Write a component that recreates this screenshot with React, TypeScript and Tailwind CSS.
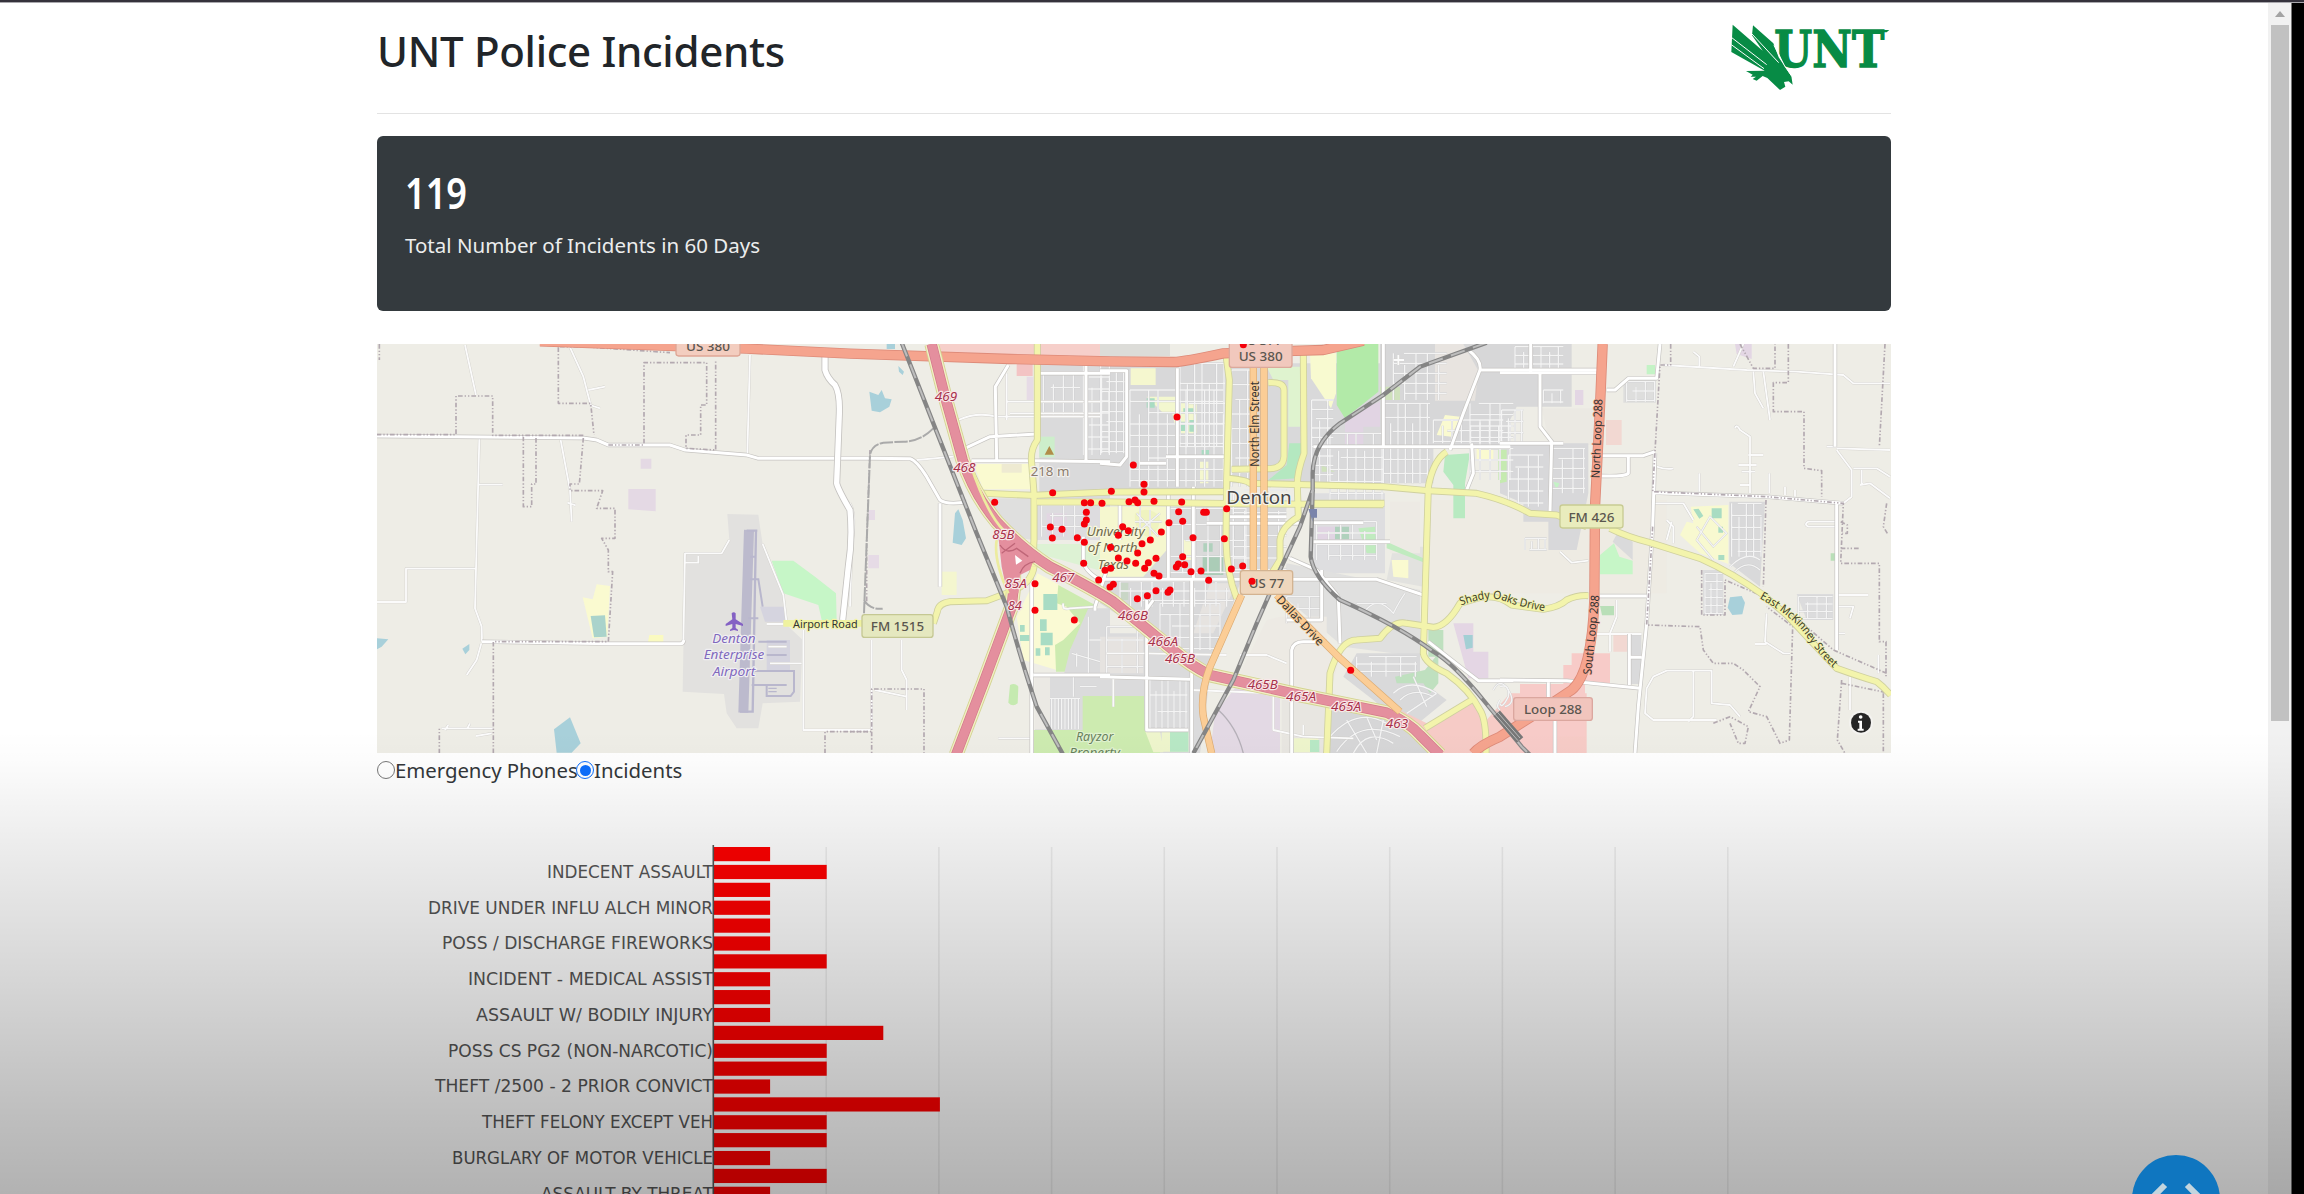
import React from 'react';

/* Horizontal origins of the map sheets, in map units (3 units per pixel). */
const WEST = 0;
const I35 = 1440;
const TOWN = 2190;
const EAST = 3390;

type Line = [number, string];
type Area = [number, string, string];

const areas: Area[] = [
  [WEST, 'M1072 522L1165 524L1170 560L1178 612L1240 765L1245 850L1298 900L1290 1085L1178 1090L1165 1165L1100 1165L1070 1120L1062 1062L938 1055L945 640L1055 640L1078 600Z', '#e2e1df'],
  [WEST, 'M1205 662L1270 662L1335 710L1398 760L1400 840L1355 840L1345 795L1240 760Z', '#c6f6c7'],
  [WEST, 'M680 733L720 738L712 890L668 895L638 772L668 778Z', '#fafad0'],
  [WEST, 'M662 828L705 826L710 890L672 892Z', '#aad3cb'],
  [WEST, 'M838 885h42v22h-46z', '#fafac0'],
  [WEST, 'M600 1132L632 1210L605 1238L560 1238L552 1168Z', '#a8d0da'],
  [WEST, 'M20 895L55 898L35 920L20 928Z M298 912V930L286 943L277 926Z', '#a8d0da'],
  [WEST, 'M775 447H857V514L775 508Z M812 356H844V386H812Z', '#e4d9e4'],
  [WEST, 'M1170 800h75v45h-60z M1190 900h70v90h-70z', '#d5d4df'],
  [I35, 'M58 155L85 165L95 150L105 175L125 178L118 200L90 217L65 212Z M315 520L325 508L338 540L348 595L335 615L308 608Z M145 78L162 95L158 105L147 95Z M110 12h25v15h-25z', '#a8d0da'],
  [I35, 'M270 12H780V50H480L270 40Z', '#f6cfca'],
  [I35, 'M500 66H548V108H500Z', '#f3c4c4'],
  [I35, 'M530 110h20v70h-20z M55 510h20v30h-20z M55 645h32v40h-32z', '#e6dbe6'],
  [I35, 'M568 70H780V475H568Z', '#dadadb'],
  [I35, 'M568 290h46v62h-46z', '#cdeecb'],
  [I35, 'M370 372H545V448H400Z', '#fafad0'],
  [I35, 'M455 372h60v26h-60z', '#eeead2'],
  [I35, 'M400 475H550V600L480 590L420 540Z', '#dfdfde'],
  [I35, 'M558 490H780V600H558Z', '#dddcdf'],
  [I35, 'M590 520h60v70h-60z', '#e2d6e2'],
  [I35, 'M560 612H780V700L560 640Z', '#ddf2d4'],
  [I35, 'M275 695h45v70h-45z', '#f4f6cf'],
  [I35, 'M562 700L620 730L720 800L620 990L520 960L500 830L550 730Z', '#fafad4'],
  [I35, 'M625 735L735 795L715 860L660 930L655 995L618 995L615 915L640 900L690 850L650 800L620 790Z', '#cdebb0'],
  [I35, 'M480 1035q15 -8 25 5l-2 50q-15 12 -28 -2z', '#c5eab0'],
  [I35, 'M580 762h42v48h-42z M510 855h14v20h-14z M510 885h28v18h-28z M570 838h20v35h-20z M572 878h36v38h-36z M557 925h14v22h-14z M585 922h14v24h-14z', '#a8dcc4'],
  [I35, 'M715 805H780V1240H555V1010H640L660 930Z', '#dbdbdc'],
  [I35, 'M555 1010H600V1168H555Z', '#ebe9e4'],
  [I35, 'M698 1068H780V1240H550V1170H698Z', '#cdebb0'],
  /* Town */
  [TOWN, 'M0 70H380V460H0Z', '#d8d8d9'],
  [TOWN, 'M0 12H210V48L0 50Z', '#dcdcd8'],
  [TOWN, 'M580 70H1000V430H390V80H450Z', '#d9d9da'],
  [TOWN, 'M840 12H1230V320H840Z', '#d7d7d8'],
  [TOWN, 'M1005 12h85l45 80l-10 90h-120z', '#e8e4e0'],
  [TOWN, 'M0 500H560L540 700H0Z', '#dadada'],
  [TOWN, 'M640 460H855V700H640Z', '#dedee0'],
  [TOWN, 'M0 700H430L330 1000L140 880L0 790Z', '#d9d9da'],
  [TOWN, 'M0 880H180L330 1010L300 1240H130L0 1060Z', '#dbdbdc'],
  [TOWN, 'M560 670L960 750V950L730 920L540 760Z', '#e0e0df'],
  [TOWN, 'M540 830H680V910L720 950L690 1060L420 1000L500 840Z', '#edeae4'],
  [TOWN, 'M330 730h80l-70 150h-60z M0 890h130v110h-130z', '#e6e3e0'],
  [TOWN, 'M770 940h190v80l80 60l-110 90l-110 -90l-90 -70z', '#d9d9da'],
  [TOWN, 'M690 1110L860 1130L960 1180L1010 1240H690Z', '#d6d6d7'],
  [TOWN, 'M405 1045L540 1075V1240H330L345 1120Z', '#e3d9e4'],
  [TOWN, 'M545 1080H690V1240H545Z', '#e8e6e1'],
  [TOWN, 'M880 620h90v120l-110 -20z', '#e2e2df'],
  [TOWN, 'M870 485H960V640L870 640Z', '#edeae4'],
  [TOWN, 'M985 480H1700V760H1100L1030 850H985Z', '#eeebe3'],
  [TOWN, 'M1060 850h60v85h45v80h-60z', '#e4d6e4'],
  [TOWN, 'M985 870h45v80h-45z M885 1010l90 -20l40 -50v90l-25 30l-20 -30h-80z', '#bfe0bf'],
  [TOWN, 'M1090 885h28v38l-20 5z', '#a3cfd4'],
  [TOWN, 'M710 12H835V155L735 235L710 195Z', '#b2eaa8'],
  [TOWN, 'M630 40h78v120l-15 45l-60 -90z', '#f8fad0'],
  [TOWN, 'M565 80h35v180h-35z M500 80h90v40h-70z', '#dff3cf'],
  [TOWN, 'M568 310h42l-20 105l-85 5l55 -45z', '#b4e8c0'],
  [TOWN, 'M705 395h-40v-20z M840 140h60v40h-60z', '#d0e2bd'],
  [TOWN, 'M760 215L840 185V260H790V315H735V250Z M650 560h60v45h-60z', '#e1d4e3'],
  [TOWN, 'M775 565l50 -5l5 80h-30z M860 605l110 50v12l-110 -42z', '#c0ebbf'],
  [TOWN, 'M705 560h42v38h-42z M310 610h28v25h-28z', '#b0d1bd'],
  [TOWN, 'M308 645H370V705H308Z', '#abccb7'],
  [TOWN, 'M1035 345l75 -5l-15 90v105h-35v-100l-30 -40z', '#b8eac1'],
  [TOWN, 'M1035 225l45 5l-25 60l-45 -5z M1130 325h50v35h-50z M875 660h50v55l-45 -5z', '#fafad0'],
  [TOWN, 'M92 85h75v50h-75z M0 500h200v130l-70 80h-130z M250 600h25v60h-25z M300 365h25v65h-25z', '#f5f7cf'],
  [TOWN, 'M140 170h90v45l-40 5z M210 190h80v90h-60z', '#f3f7cf'],
  [TOWN, 'M140 175h24v28h-24z M250 205h30v14h-30z M240 245h18v28h-18z M268 240h16v35h-16z M305 330h22v18h-22z', '#a9dcc2'],
  [TOWN, 'M1195 320h25v100h-25z', '#c5eab0'],
  [TOWN, 'M105 520q40 -25 75 10q0 50 -40 60q-40 -20 -35 -70z', '#eff3bf'],
  [TOWN, 'M60 720h25v60h-25z', '#c9d6c6'],
  [TOWN, 'M0 1068H132L135 1170H180V1240H0Z', '#cdebb0'],
  [TOWN, 'M135 1172h45l10 65h-30z M185 1175h80v60h-80z M570 1195h85v42h-85z', '#eef5cc'],
  [TOWN, 'M210 1175h55v60h-55z M630 1200h28v36h-28z', '#b8e8c5'],
  [TOWN, 'M900 1110L980 1150L1115 1080L1160 1160V1240H1030Z', '#f6cbc6'],
  [TOWN, 'M1160 1140L1230 1060H1460V1240H1160Z', '#f6cbc6'],
  /* East */
  [EAST, 'M0 12H215V200H50L0 300Z', '#d8d8d9'],
  [EAST, 'M125 205H285V315H150Z', '#ebe9e3'],
  [EAST, 'M0 310H265V460L230 630H145V545H70V490L0 460Z', '#d8d8da'],
  [EAST, 'M225 150h25v45h-25z M705 12h50v45l-45 -15z', '#e3d6e4'],
  [EAST, 'M0 320h20v105l-20 5z', '#c5eab0'],
  [EAST, 'M440 75h25v28h-25z M160 425l18 5l-8 20z', '#c4f3c6'],
  [EAST, 'M318 240h47v75h-47z M340 885h42v50h-42z', '#f2d8d2'],
  [EAST, 'M215 940H330V1032H190V975H215Z M60 1032H255V1190H175V1240H60Z', '#f7cbc8'],
  [EAST, 'M370 120H468V188H370Z', '#dededd'],
  [EAST, 'M352 580l46 25v55l-60 -55z M388 882h36v150h-36z', '#dadadb'],
  [EAST, 'M342 610L358 650L398 662V703H300V645Z', '#c6f6c7'],
  [EAST, 'M300 798h42v28h-36z M992 640h16v22h-16z', '#b9dfb8'],
  [EAST, 'M572 500L685 495V672L600 640L540 585L560 545L580 550Z', '#f8f9d0'],
  [EAST, 'M580 508l16 -2l14 22l-12 8z M635 505h30v30h-30z M655 560h14v18h-14z M655 645h18v15h-18z', '#a9dcc2'],
  [EAST, 'M688 485H795L780 740L688 670Z', '#d9d9da'],
  [EAST, 'M608 690L670 690V825H610Z', '#dcdcdd'],
  [EAST, 'M690 772l35 -4l10 20l-8 35l-30 2l-14 -22z', '#a8d0da'],
  [EAST, 'M890 762H1000V840H920Z', '#dcdcdd'],
];

/* Straight residential streets covering a block. */
function streets(x0: number, y0: number, x1: number, y1: number, dx: number, dy: number) {
  let d = '';
  let i = 0;
  for (let x = x0; x <= x1; x += dx, i++) {
    const inset = (i * 37) % 3 === 1 ? (y1 - y0) * 0.25 : 0;
    d += `M${x} ${y0 + inset}V${y1}`;
  }
  for (let y = y0; y <= y1; y += dy, i++) {
    const inset = (i * 53) % 4 === 1 ? (x1 - x0) * 0.2 : 0;
    d += `M${x0 + inset} ${y}H${x1}`;
  }
  return d;
}

const fineStreets: Line[] = [
  [I35, streets(580, 100, 690, 230, 30, 42)],
  [I35, streets(700, 75, 780, 345, 26, 36)],
  [I35, streets(575, 495, 700, 590, 33, 32)],
  [I35, 'M605 1075V1168M615 1075V1168M625 1075V1168M635 1075V1168M645 1075V1168M655 1075V1168M665 1075V1168M675 1075V1168M685 1075V1168M600 1075H690M718 900H755M715 830V1010M670 1010V1070M690 1040H740M665 940L750 965M680 940V980'],
  [TOWN, streets(5, 95, 75, 340, 22, 30)],
  [TOWN, streets(90, 150, 370, 440, 28, 34)],
  [TOWN, streets(240, 70, 375, 320, 22, 60)],
  [TOWN, streets(395, 90, 450, 440, 24, 44)],
  [TOWN, streets(635, 180, 700, 425, 24, 28)],
  [TOWN, streets(690, 280, 850, 490, 26, 36)],
  [TOWN, streets(850, 190, 990, 430, 22, 42)],
  [TOWN, streets(880, 40, 1040, 180, 34, 30)],
  [TOWN, streets(1000, 240, 1210, 310, 28, 32)],
  [TOWN, streets(1110, 190, 1240, 420, 30, 34)],
  [TOWN, streets(210, 505, 440, 700, 38, 48)],
  [TOWN, streets(400, 450, 560, 700, 34, 34)],
  [TOWN, streets(60, 725, 400, 800, 32, 28)],
  [TOWN, streets(180, 790, 360, 930, 30, 34)],
  [TOWN, streets(20, 860, 130, 1000, 46, 40)],
  [TOWN, streets(150, 1015, 262, 1165, 18, 50)],
  [TOWN, streets(650, 545, 830, 660, 36, 34)],
  [TOWN, streets(560, 770, 660, 850, 34, 36)],
  [TOWN, streets(770, 950, 950, 1010, 44, 22)],
  [TOWN, 'M690 1190Q770 1100 860 1150M710 1235Q780 1130 900 1190M760 1240Q800 1160 880 1210M800 1130L830 1200M740 1140L800 1240M850 1140L830 1240M880 1060Q930 1010 1010 1060M900 1080Q940 1040 1000 1070M940 1010L980 1100M920 1120L1010 1060M790 820Q830 760 880 820Q900 780 915 760M770 790H860M1180 1050q20 -40 45 0t-10 50M1200 1080q-15 20 0 30'],
  [TOWN, 'M120 500v100M150 510v90M105 545h80M110 580L180 520M110 520L175 590'],
  [EAST, streets(45, 20, 190, 85, 26, 26)],
  [EAST, streets(5, 210, 70, 310, 20, 34)],
  [EAST, streets(155, 325, 255, 460, 32, 30)],
  [EAST, streets(25, 345, 130, 500, 30, 36)],
  [EAST, streets(75, 595, 140, 630, 20, 34)],
  [EAST, streets(130, 150, 190, 190, 26, 36)],
  [EAST, streets(380, 125, 465, 185, 28, 28)],
  [EAST, streets(695, 490, 785, 650, 22, 36)],
  [EAST, streets(615, 700, 668, 820, 18, 24)],
  [EAST, streets(895, 770, 998, 838, 28, 22)],
  [EAST, 'M690 680Q740 630 780 660M700 700Q740 655 780 690M590 560L640 620L680 580L630 530L590 600L640 660M0 1040q30 -10 25 30q-20 40 -25 20'],
];

const whiteThin: Line[] = [
  [WEST, 'M285 15L318 165M328 295L315 805L335 860L336 905M326 434H398M20 786H108V686H316M334 910L320 960L290 1005M572 300L600 450L605 545M592 488l25 8M600 22L640 110L662 195M655 150L705 140M660 195L690 205M215 1165H370M235 1155l-10 15M300 1150l-8 15M318 1188L365 1180M1140 45L1132 340M940 915L945 640H1055L1078 600M1178 612L1240 765L1250 850M1190 852h50M1195 920h55M1200 970h95M1300 870V1170H1500M945 668H985V648'],
  [I35, 'M470 185H750M480 220H750M325 240Q380 215 440 230H750M470 100V240M200 360L310 350M270 490V640M0 490Q20 520 5 620L0 800M155 900V990L170 1020V1110M75 1050L170 1070M65 900V1170M640 790q-5 22 20 15L740 800M445 1195H545'],
  [TOWN, 'M20 940H130L380 945M0 1015H140M420 945H500L560 970M275 1050L520 1060V1170L610 1190L760 1195M610 1155V1185M40 1015V1100M560 650L640 690M880 60h32M895 45v30'],
  [EAST, 'M490 75L740 90L890 95L1030 105L1060 130H1170M760 95L765 160L790 205M790 95L810 240M705 265Q710 250 720 270L750 290V460M715 375H770M725 395H765M720 435H750M745 345H790M598 400V455M808 400V460M855 440V465M885 450V470M730 12L700 80M580 35l18 15v30M470 380Q500 390 520 385M1010 545H925q-15 8 0 15H1010M180 635L215 668L265 662M350 780V830L330 880V935M290 882H425M455 490H550L580 540M500 540L520 560V610M515 545L500 600M800 820L795 905L850 940H870M765 912H800M1010 765H1105M1010 800H1060L1050 835M1010 880H1035M440 1045L460 1010L500 992H635V1090L690 1095L720 1130M580 990V1130L565 1145M440 1045L435 1120L460 1140H650M1010 545V930M1010 330L1055 390V470L1030 490M980 320H1010M1060 385H1130L1170 410M1080 435L1110 430L1170 475M1085 390V435M1010 325L1170 330M1135 945V1000M1050 1010V1110'],
];

const whiteMain: Line[] = [
  [WEST, 'M20 288L640 294L680 300L715 315L900 315L945 330L1130 345L1165 355H1500L1620 356Q1640 362 1670 410L1710 480Q1730 495 1790 486'],
  [WEST, 'M336 905L720 911H930Q940 912 942 900'],
  [I35, 'M475 75L436 140L440 360M345 325L420 290L560 282M270 490L270 740M365 362H560L780 365M545 700V1240M550 1005H780M700 590V660Q700 690 750 720M770 690L735 800V812M708 360V75M568 100H780'],
  [TOWN, 'M0 92H80V350L60 375L0 370M120 370H198M198 350H380M232 85V440M205 460V720M60 480V600M0 718H830L970 765M280 440V720M140 780V900L140 1170H265M275 720V1240M0 1010L270 1018M160 780L110 850M570 655L650 690L715 770M665 690V840H560M715 770L720 910M575 1240V930Q580 905 610 905H680M640 320H1230M640 548H790M640 605H870M320 550H600M850 12V320M1105 30Q1145 60 1140 90L1090 220L1050 330M1140 90H1500M985 905Q1080 980 1135 1022H1240M1115 310L1120 400L1100 450M840 800M390 530H560'],
  [EAST, 'M0 98H290M92 12V98M120 98V260L155 305L150 515M0 310H190M320 150H345L385 115H470L480 12M305 347H385V400Q375 410 305 408M385 347H430L465 335M465 340L458 560L440 850L415 1100L405 1240M460 458L800 470L1030 490M1005 12V320M1010 490V930M300 768H440M0 1020L200 1022L420 1045M145 1022V1080M165 1140V1240M388 882V1035M390 952H425'],
];

const boundaries: Line[] = [
  [WEST, 'M20 284H258V168H368V286H640M28 12V60M565 22V190H662L672 285M570 20H640L900 38M822 310V68H1010V195H992V285H948V325L1037 330V60M460 290V500H485V432H498V290M640 294L628 432H600V452H698L680 505H735V595H695L715 630V695H728L715 905L370 905V1240M715 315H820M208 1240V1165M1365 1240V1175H1500'],
  [WEST, 'M1500 330L1490 600V790'],
  [I35, 'M0 1175H65V1047H222V1240M65 1175V1240'],
  [EAST, 'M512 12V75H480L458 455L800 470L1030 490L1022 670H1138V905H1158V1010M720 12L760 85H825V12M865 12V128H820V215H912V385L965 392V470M1155 12L1138 320M1160 490L1150 560L1165 585M458 560L440 855L600 860L610 930L640 970H700L730 990L780 1040L745 1115L800 1130L840 1210L868 1200L878 860L800 800M798 480L790 740M605 690V825H675V720L780 765M880 825L1000 930L1160 1000M1025 1030L1170 1060M1025 1020L1012 1200L1035 1240M1150 1060V1240M640 1150L690 1130L745 1160L735 1210H715L690 1150M1022 545l20 10v25h-15M1022 625H1078'],
];

const yellowRoads: Line[] = [
  [I35, 'M562 12V300Q540 330 545 370L552 460V600Q550 620 552 680'],
  [I35, 'M400 460L550 466L780 456L1120 455'],
  [I35, 'M560 486H780L1240 492L1600 494'],
  [I35, 'M552 680Q545 735 470 760L410 782L300 785Q265 790 262 815L250 850'],
  [TOWN, 'M378 45L388 120L380 420L378 600Q380 700 410 775'],
  [TOWN, 'M610 45L612 340Q590 400 592 440L595 530Q545 560 540 600L540 660L515 700'],
  [TOWN, 'M505 128Q552 125 552 150V350Q550 385 510 386L395 388'],
  [TOWN, 'M385 415Q440 420 450 430L850 440L985 452L1130 460Q1220 480 1290 520L1370 525L1460 560'],
  [TOWN, 'M640 490H853'],
  [TOWN, 'M1040 335Q1000 360 985 440L970 940Q975 970 1040 1000Q1110 1050 1140 1110Q1160 1140 1158 1240'],
  [TOWN, 'M680 1240L690 1000Q720 900 770 900L840 895Q880 840 920 850L1000 862Q1040 860 1080 790L1130 775Q1190 760 1235 795L1330 808Q1380 800 1400 780Q1430 765 1465 767'],
  [TOWN, 'M975 1165L1115 1080'],
  [EAST, 'M330 565Q380 590 450 608L600 655Q700 700 790 765L860 825Q930 900 1010 985Q1080 1010 1130 1025Q1150 1040 1172 1065'],
];

const orangeRoads: Line[] = [
  [TOWN, 'M460 80V700M492 80V700M530 765L720 955L900 1115M425 765L330 980Q300 1060 310 1130L335 1240'],
];

const redRoads: Line[] = [
  [WEST, 'M510 4L1130 26L1440 41L1920 57L2220 64L2410 66Q2440 66 2560 40L2720 34L2860 30L2980 2'],
  [EAST, 'M308 12L300 200L285 500L283 780Q275 1000 215 1050L110 1120L0 1190Q-60 1215 -80 1240'],
];

const motorways: Line[] = [
  [I35, 'M245 12L285 170L338 360Q370 460 440 545Q520 630 600 680Q720 740 790 785L870 850L975 935Q1020 975 1080 1005L1350 1065L1610 1118Q1680 1150 1710 1185L1770 1245'],
  [I35, 'M480 590Q500 690 485 800L400 1030L318 1245'],
];

const railways: Line[] = [
  [I35, 'M155 8L250 250L380 580L470 800Q510 950 560 1100L640 1245'],
  [TOWN, 'M1160 8L960 80L850 165L720 250Q640 310 638 400V450L600 560L540 690L470 850L400 1020L280 1240'],
  [TOWN, 'M638 450L632 650Q640 710 720 780Q900 860 1000 935Q1060 970 1150 1080L1265 1220L1290 1245'],
];

const dots: [number, number][] = [
  [310, 75], [342, 133], [342, 156], [244, 154], [68, 158], [163, 188], [182, 188], [216, 190], [297, 185], [315, 180], [323, 188], [372, 184], [455, 186],
  [169, 217], [169, 240], [163, 252], [446, 215], [521, 217], [529, 217], [590, 206], [61, 261], [96, 268], [67, 294], [278, 260], [295, 272], [265, 286],
  [142, 293], [163, 307], [394, 276], [417, 248], [458, 244], [489, 293], [583, 296], [336, 311], [361, 300], [242, 322], [323, 339], [265, 354], [291, 363],
  [317, 370], [378, 355], [355, 368], [344, 385], [161, 370], [225, 391], [242, 385], [458, 350], [445, 372], [439, 381], [464, 374], [483, 395], [513, 393],
  [536, 421], [604, 387], [638, 378], [666, 424], [372, 400], [387, 408], [206, 420], [240, 441], [250, 433], [378, 452], [352, 467], [322, 476], [414, 457],
  [420, 450], [15, 431], [15, 511], [133, 540], [-106, 187], [441, -69], [962, 691], [640, -286],
];

function Strokes({ lines, color, width, dash }: { lines: Line[]; color: string; width: number; dash?: string }) {
  return (
    <g fill="none" stroke={color} strokeWidth={width} strokeDasharray={dash} strokeLinejoin="round">
      {lines.map(([x, d], i) => (
        <path key={i} d={d} transform={`translate(${x} 0)`} />
      ))}
    </g>
  );
}

function Label({ x, y, size, width, color = '#333', halo = '#fff', haloWidth = 7, italic, rotate, children }: {
  x: number; y: number; size: number; width?: number; color?: string; halo?: string; haloWidth?: number; italic?: boolean; rotate?: number; children: string;
}) {
  return (
    <text
      x={x}
      y={y}
      fontSize={size}
      fill={color}
      stroke={halo}
      strokeWidth={haloWidth}
      strokeLinejoin="round"
      paintOrder="stroke"
      textAnchor="middle"
      fontStyle={italic ? 'italic' : undefined}
      textLength={width}
      lengthAdjust="spacingAndGlyphs"
      transform={rotate ? `rotate(${rotate} ${x} ${y})` : undefined}
    >
      {children}
    </text>
  );
}

function Shield({ x, y, w, h, fill, edge, lines }: { x: number; y: number; w: number; h: number; fill: string; edge: string; lines: [string, number, number][] }) {
  return (
    <g fontWeight="500">
      <rect x={x} y={y} width={w} height={h} rx={8} fill={fill} stroke={edge} strokeWidth={4} />
      {lines.map(([t, by, tw]) => (
        <Label key={t} x={x + w / 2} y={by} size={39} width={tw} color="#5a564f" haloWidth={0}>{t}</Label>
      ))}
    </g>
  );
}

const exits: [string, number, number][] = [
  ['469', I35 + 288, 182], ['468', I35 + 343, 396], ['85B', I35 + 460, 597], ['85A', I35 + 497, 744], ['84', I35 + 494, 810], ['467', I35 + 640, 725],
  ['466B', TOWN + 99, 840], ['466A', TOWN + 189, 917], ['465B', TOWN + 240, 968], ['465B', TOWN + 488, 1046], ['465A', TOWN + 603, 1083], ['465A', TOWN + 738, 1114], ['463', TOWN + 891, 1164],
];

function IncidentMap() {
  return (
    <svg viewBox="21 12 4542 1227" preserveAspectRatio="none" className="block h-[409px] w-full" fontFamily="'Noto Sans', sans-serif">
      <rect x="0" y="0" width="4600" height="1260" fill="#eeede6" />
      {areas.map(([x, d, fill], i) => (
        <path key={i} d={d} fill={fill} transform={`translate(${x} 0)`} />
      ))}
      <g fill="none" stroke="#b9b7cd">
        <path d="M1137 570L1120 1118" strokeWidth="30" stroke="#bcbacd" />
        <path d="M1158 570L1148 1118M1130 572H1162M1110 1115H1150" strokeWidth="7" />
        <path d="M1140 650h18M1140 718H1165L1178 800M1135 835h30M1165 905h85M1190 945h60M1150 993H1272V1055L1262 1068H1190V1035M1145 1035H1250" strokeWidth="6" />
        <path d="M1195 1045h25M1195 1055h25" strokeWidth="4" />
      </g>
      <Strokes lines={fineStreets} color="#cdcdce" width={6} />
      <Strokes lines={fineStreets} color="#f4f4f4" width={4} />
      <Strokes lines={whiteThin} color="#d2d0cc" width={8} />
      <Strokes lines={whiteThin} color="#fbfbfb" width={5.5} />
      <Strokes lines={whiteMain} color="#c6c4c1" width={13} />
      <Strokes lines={whiteMain} color="#ffffff" width={9} />
      <path d="M1365 45V90Q1372 115 1395 135Q1410 160 1408 220L1400 430Q1405 450 1440 510Q1448 600 1435 680L1418 840" fill="none" stroke="#c4c2bf" strokeWidth="21" />
      <path d="M1365 45V90Q1372 115 1395 135Q1410 160 1408 220L1400 430Q1405 450 1440 510Q1448 600 1435 680L1418 840" fill="none" stroke="#fff" strokeWidth="16" />
      <Strokes lines={boundaries} color="#b3a9b0" width={5} dash="14 6 4 6 4 6" />
      <path d="M1690 265Q1650 305 1600 305L1540 308Q1505 315 1500 345L1482 820M1482 780Q1500 810 1538 806" fill="none" stroke="#aaa" strokeWidth="6" strokeDasharray="40 4" />
      <path d="M2545 1110Q2600 1160 2620 1240" fill="none" stroke="#b5b0b8" strokeWidth="4" />
      <Strokes lines={yellowRoads} color="#cfd09f" width={21} />
      <Strokes lines={yellowRoads} color="#f3f4ac" width={16} />
      <path d="M1240 850H1500" fill="none" stroke="#eff2a0" strokeWidth="20" />
      <Strokes lines={redRoads} color="#dd8a78" width={31} />
      <Strokes lines={redRoads} color="#f5a48e" width={26} />
      <Strokes lines={motorways} color="#d3d391" width={44} />
      <Strokes lines={motorways} color="#f2efc4" width={39} />
      <Strokes lines={motorways} color="#d2788a" width={31} />
      <Strokes lines={motorways} color="#e48f9e" width={27} />
      <path d="M1885 590L1930 605L1995 650L1980 690L1950 705L1945 760H1912L1895 680Z" fill="#e48f9e" />
      <path d="M1890 615q20 30 50 10l35 25M1895 640l40 -30M1950 700q10 -30 45 -35" fill="none" stroke="#bf6678" strokeWidth="4" />
      <path d="M1935 645L1957 662L1938 674Z" fill="#fff" />
      <path d="M1800 370Q1850 520 1900 570M1880 600Q1870 660 1915 760" fill="none" stroke="#ecec9f" strokeWidth="8" />
      <Strokes lines={orangeRoads} color="#dcab72" width={22} />
      <Strokes lines={orangeRoads} color="#fbcd96" width={18} />
      <Strokes lines={railways} color="#858585" width={13} />
      <Strokes lines={railways} color="#bdbdbd" width={6} dash="44 26" />
      <path d="M3380 1120L3450 1200" stroke="#777" strokeWidth="26" />
      <path d="M3380 1114L3450 1194M3374 1122L3444 1202" stroke="#bbb" strokeWidth="3" />
      <path d="M2815 507h26v26h-13v12z" fill="#7a84ab" />
      <path d="M2038 318l14 26h-28z" fill="#b18d49" />

      <Label x={I35 + 600} y={407} size={38} width={116} color="#8b7b6c" halo="#f2f0ec">218 m</Label>
      {exits.map(([t, x, y], i) => (
        <Label key={i} x={x} y={y} size={39} width={t.length === 4 ? 90 : t.length === 3 ? 67 : 42} color="#a8324a" halo="#f8e9ea" italic>{t}</Label>
      ))}

      <path d="M1085 820q6 -6 12 0v18l22 14v6l-22 -6v12l7 5v4l-12 -3l-12 3v-4l7 -5v-12l-20 6v-6l20 -14z" fill="#8461c4" />
      <Label x={1092} y={908} size={39} width={130} color="#8069bd" halo="#f0eff2" italic>Denton</Label>
      <Label x={1092} y={957} size={39} width={182} color="#8069bd" halo="#f0eff2" italic>Enterprise</Label>
      <Label x={1092} y={1007} size={39} width={128} color="#8069bd" halo="#f0eff2" italic>Airport</Label>
      <Label x={1366} y={865} size={35} width={194} halo="#f2f3a7">Airport Road</Label>

      <Label x={2237} y={587} size={38} width={174} color="#6f6a4c" halo="#f8f8da" italic>University</Label>
      <Label x={2228} y={636} size={38} width={150} color="#6f6a4c" halo="#f8f8da" italic>of North</Label>
      <Label x={2230} y={686} size={38} width={94} color="#6f6a4c" halo="#f8f8da" italic>Texas</Label>
      <Label x={2667} y={493} size={54} width={196} color="#454545" halo="#f3f3ee">Denton</Label>
      <Label x={2174} y={1204} size={37} width={112} color="#67805b" halo="#e0f2d0" italic>Rayzor</Label>
      <Label x={2174} y={1250} size={37} width={152} color="#67805b" halo="#e0f2d0" italic>Property</Label>

      <Label x={2666} y={252} size={36} width={256} rotate={-90} halo="#fbcb91" haloWidth={4}>North Elm Street</Label>
      <Label x={2782} y={850} size={35} width={190} rotate={47} halo="#fbcb91" haloWidth={4}>Dallas Drive</Label>
      <Label x={3693} y={296} size={35} width={238} rotate={-88} halo="#f5a48e" haloWidth={4}>North Loop 288</Label>
      <Label x={3676} y={886} size={35} width={240} rotate={-84} halo="#f5a48e" haloWidth={4}>South Loop 288</Label>
      <path id="shady" d="M3273 797Q3360 765 3400 782T3532 815" fill="none" />
      <text fontSize="34" fill="#3c3c2c" stroke="#f2f3a7" strokeWidth="4" paintOrder="stroke" textLength="258" lengthAdjust="spacingAndGlyphs">
        <textPath href="#shady">Shady Oaks Drive</textPath>
      </text>
      <path id="mckinney" d="M4168 775Q4270 830 4310 890T4395 988" fill="none" />
      <text fontSize="34" fill="#3c3c2c" stroke="#f2f3a7" strokeWidth="4" paintOrder="stroke" textLength="308" lengthAdjust="spacingAndGlyphs">
        <textPath href="#mckinney">East McKinney Street</textPath>
      </text>

      <Shield x={918} y={-20} w={192} h={68} fill="#f3cdbf" edge="#dfa796" lines={[['US 380', 33, 132]]} />
      <Shield x={TOWN + 388} y={-40} w={188} h={122} fill="#f1c8bd" edge="#dca99c" lines={[['US 377', 15, 132], ['US 380', 64, 132]]} />
      <Shield x={TOWN + 421} y={692} w={157} h={71} fill="#efd7bd" edge="#d3b391" lines={[['US 77', 745, 106]]} />
      <Shield x={I35 + 36} y={824} w={213} h={68} fill="#e5e8bf" edge="#c5c893" lines={[['FM 1515', 873, 160]]} />
      <Shield x={EAST + 180} y={495} w={189} h={69} fill="#e9ecbd" edge="#c8cb93" lines={[['FM 426', 546, 138]]} />
      <Shield x={EAST + 41} y={1073} w={236} h={68} fill="#f1c5bd" edge="#dba79f" lines={[['Loop 288', 1122, 174]]} />

      {dots.map(([x, y], i) => (
        <circle key={i} cx={x + 1980} cy={y + 300} r="10.5" fill="#f5000a" />
      ))}

      <circle cx={EAST + 1083} cy="1148" r="36" fill="#f4f3f0" />
      <circle cx={EAST + 1083} cy="1148" r="30" fill="#262626" />
      <circle cx={EAST + 1082} cy="1131" r="5.5" fill="#fff" />
      <path d={`M${EAST + 1074} 1142h12v24h5v6h-18v-6h5v-18h-4z`} fill="#fff" />
    </svg>
  );
}

const offenses: { label?: string; width?: number; count: number }[] = [
  { count: 1 },
  { label: 'INDECENT ASSAULT', width: 166, count: 2 },
  { count: 1 },
  { label: 'DRIVE UNDER INFLU ALCH MINOR', width: 285, count: 1 },
  { count: 1 },
  { label: 'POSS / DISCHARGE FIREWORKS', width: 271, count: 1 },
  { count: 2 },
  { label: 'INCIDENT - MEDICAL ASSIST', width: 245, count: 1 },
  { count: 1 },
  { label: 'ASSAULT W/ BODILY INJURY', width: 237, count: 1 },
  { count: 3 },
  { label: 'POSS CS PG2 (NON-NARCOTIC)', width: 265, count: 2 },
  { count: 2 },
  { label: 'THEFT /2500 - 2 PRIOR CONVICT', width: 278, count: 1 },
  { count: 4 },
  { label: 'THEFT FELONY EXCEPT VEH', width: 231, count: 2 },
  { count: 2 },
  { label: 'BURGLARY OF MOTOR VEHICLE', width: 261, count: 1 },
  { count: 2 },
  { label: 'ASSAULT BY THREAT', width: 172, count: 1 },
];

function IncidentChart() {
  const axis = 336.5;
  return (
    <svg viewBox="0 0 1514 360" className="mt-[50px] block h-[360px] w-full shrink-0" fontFamily="'DejaVu Sans', Verdana, sans-serif">
      {Array.from({ length: 9 }, (_, i) => (
        <rect key={i} x={axis + 112.7 * (i + 1) - 0.8} y="12" width="1.6" height="348" fill="#eeeeee" />
      ))}
      {offenses.map((o, i) => (
        <g key={i}>
          <rect x={axis} y={12 + 17.88 * i} width={56.6 * o.count} height="14.2" fill="#ff0000" />
          {o.label && (
            <text x="336" y={25 + 17.88 * i} fontSize="17.4" fill="#555" textAnchor="end" textLength={o.width} lengthAdjust="spacingAndGlyphs">
              {o.label}
            </text>
          )}
        </g>
      ))}
      <rect x={axis - 1} y="10" width="1.6" height="350" fill="#555" />
    </svg>
  );
}

function Logo() {
  return (
    <svg viewBox="0 0 540 252" className="h-[84px] w-[180px]" role="img" aria-label="UNT">
      <text x="163" y="152" fontFamily="'DejaVu Serif', serif" fontWeight="700" fontSize="150" fill="#078b45" stroke="#078b45" strokeWidth="4" textLength="330" lengthAdjust="spacingAndGlyphs">UNT</text>
      <path d="M468 42H508L500 49H486Z" fill="#078b45" />
      <path d="M96 26L165 86L192 148L214 182L196 190L160 150L92 50Z" fill="#fff" />
      <path d="M38 26L128 104L96 58L99 28L160 82L176 124L214 180L218 206L206 196L192 198L196 212L180 222L142 186L128 180L110 194L98 189L108 182L92 182L98 176L78 165L134 164L34 108Z" fill="#078b45" />
      <path d="M34 64L140 146M34 86L132 158M96 54L176 140" stroke="#fff" strokeWidth="3" fill="none" />
      <path d="M162 88L194 150L216 182" stroke="#fff" strokeWidth="3" fill="none" />
    </svg>
  );
}

function Radio({ checked }: { checked?: boolean }) {
  return checked ? (
    <span className="flex size-[18px] shrink-0 items-center justify-center rounded-full border-[1.5px] border-[#0d6efd] bg-white">
      <span className="size-[11px] rounded-full bg-[#0d6efd]" />
    </span>
  ) : (
    <span className="size-[18px] shrink-0 rounded-full border-[1.5px] border-[#777] bg-white" />
  );
}

export default function App() {
  return (
    <div className="relative flex h-[1194px] w-[2304px] flex-col overflow-hidden bg-white font-['Noto_Sans',sans-serif] text-[#212529]">
      <div className="h-[3px] shrink-0 border-b border-[#a9a8ad] bg-[#35323c]" />
      <div className="flex min-h-0 flex-1">
        <main className="flex flex-1 flex-col pl-[377px]">
          <div className="flex w-[1514px] flex-col">
            <header className="flex h-[111px] items-start justify-between border-b border-[#e3e3e3]">
              <h1 className="mt-[18px] whitespace-nowrap text-[42px] font-medium leading-[60px] tracking-[-0.3px]">UNT Police Incidents</h1>
              <div className="mr-[-9px] mt-[13px]"><Logo /></div>
            </header>
            <section className="mt-[22px] h-[175px] rounded-[6px] bg-[#343a3e] pl-[28px] pt-[30px] text-white">
              <div className="w-fit origin-left scale-x-[0.84] text-[43px] font-semibold leading-[54px]">119</div>
              <p className="mt-[9px] whitespace-nowrap text-[20.5px] leading-[32px] text-[#eceded]">Total Number of Incidents in 60 Days</p>
            </section>
            <div className="mt-[33px]"><IncidentMap /></div>
            <div className="flex h-[32px] items-center pt-[2px] text-[20.4px] leading-[30px] text-[#33373a]">
              <Radio />
              <span className="w-[181px] whitespace-nowrap tracking-[-0.05px]">Emergency Phones</span>
              <Radio checked />
              <span className="whitespace-nowrap">Incidents</span>
            </div>
            <IncidentChart />
          </div>
        </main>
        <div className="flex w-[23px] flex-col items-center bg-[#f1f1f1]">
          <div className="flex h-[22px] items-center justify-center">
            <svg viewBox="0 0 10 6" className="h-[6px] w-[10px]"><path d="M5 0L10 6H0Z" fill="#a3a3a3" /></svg>
          </div>
          <div className="h-[696px] w-[18px] bg-[#c1c1c1]" />
        </div>
        <div className="w-[13px] border-l border-[#777] bg-black" />
      </div>
      <div className="absolute inset-x-0 bottom-0 h-[464px] bg-[linear-gradient(to_bottom,rgba(0,0,0,0)_0%,rgba(0,0,0,0.012)_6%,rgba(0,0,0,0.075)_25%,rgba(0,0,0,0.165)_55%,rgba(0,0,0,0.25)_82%,rgba(0,0,0,0.3)_100%)]" />
      <div className="absolute left-[2132px] top-[1155px] flex h-[88px] w-[88px] items-center justify-center rounded-full bg-[#0f76c0]">
        <svg viewBox="0 0 88 88" className="size-[88px]" fill="none" stroke="#c3d5de" strokeWidth="6">
          <path d="M33 30L17 46L33 62M55 30L71 46L55 62" />
        </svg>
      </div>
    </div>
  );
}
